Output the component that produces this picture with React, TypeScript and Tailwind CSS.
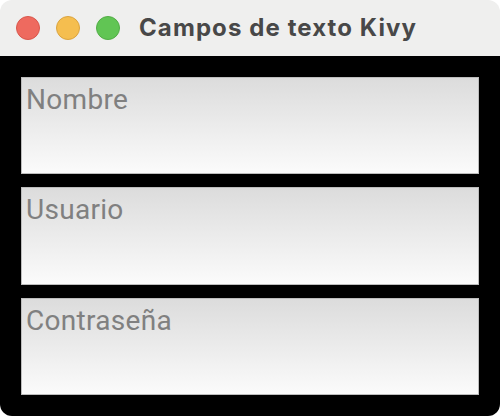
const fields = ["Nombre", "Usuario", "Contraseña"];

export default function App() {
  return (
    <div className="h-[416px] w-[500px] bg-white">
      <div className="flex h-full w-full flex-col overflow-hidden rounded-[12px]">
        <header className="flex h-[56px] shrink-0 items-center bg-[#efefee] pl-[16px]">
          <div className="flex items-center gap-[16px]">
            <span className="h-[24px] w-[24px] rounded-full border border-[#d9574c] bg-[#ee6a5f]" />
            <span className="h-[24px] w-[24px] rounded-full border border-[#dba43f] bg-[#f5be4f]" />
            <span className="h-[24px] w-[24px] rounded-full border border-[#52ad46] bg-[#61c554]" />
          </div>
          <h1 className="ml-[19px] font-['Inter',sans-serif] text-[24px] font-bold tracking-[1.1px] text-[#484848]">
            Campos de texto Kivy
          </h1>
        </header>
        <main className="flex flex-1 flex-col gap-[13px] bg-black p-[21px]">
          {fields.map((f) => (
            <div
              key={f}
              className="flex-1 border border-[#bdbdbd] bg-gradient-to-b from-[#dcdcdc] to-[#fbfbfb] px-[4px] pt-[7px]"
            >
              <span className="font-['Roboto',sans-serif] text-[28px] leading-[30px] tracking-[0.3px] text-[#808080]">{f}</span>
            </div>
          ))}
        </main>
      </div>
    </div>
  );
}
